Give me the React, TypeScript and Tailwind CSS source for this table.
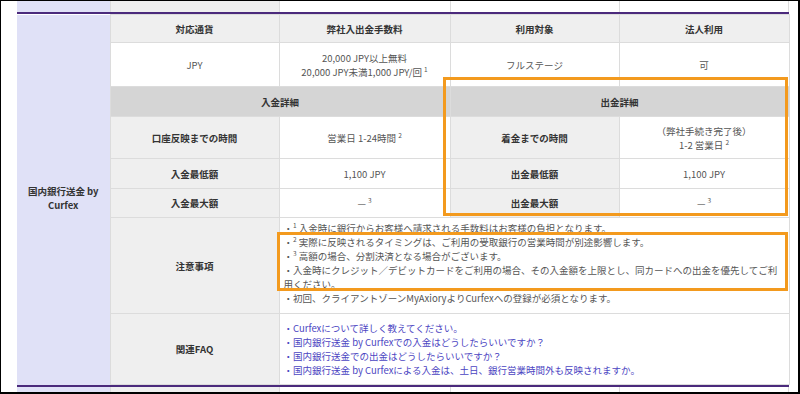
import React from 'react';

const label = 'bg-[#efefef] font-bold text-[#333] text-center border border-[#dcdcdc]';
const value = 'bg-white text-[#555] text-center border border-[#dcdcdc]';

function Sup({ n }: { n: number }) {
  return <span className="relative -top-[4px] text-[6.5px] leading-[0]">{n}</span>;
}

const notes = [
  <><Sup n={1} /> 入金時に銀行からお客様へ請求される手数料はお客様の負担となります。</>,
  <><Sup n={2} /> 実際に反映されるタイミングは、ご利用の受取銀行の営業時間が別途影響します。</>,
  <><Sup n={3} /> 高額の場合、分割決済となる場合がございます。</>,
  <>入金時にクレジット／デビットカードをご利用の場合、その入金額を上限とし、同カードへの出金を優先してご利用ください。</>,
  <>初回、クライアントゾーンMyAxioryよりCurfexへの登録が必須となります。</>,
];

const faqs = [
  'Curfexについて詳しく教えてください。',
  '国内銀行送金 by Curfexでの入金はどうしたらいいですか？',
  '国内銀行送金での出金はどうしたらいいですか？',
  '国内銀行送金 by Curfexによる入金は、土日、銀行営業時間外も反映されますか。',
];

function FragmentRow({ height }: { height: string }) {
  return (
    <div className={`flex ${height}`}>
      <div className="w-[93px] bg-[#e0e1f7]" />
      <div className="w-[169px] bg-[#efefef] border-l border-[#dcdcdc]" />
      <div className="w-[171px] bg-white border-l border-[#dcdcdc]" />
      <div className="w-[169px] bg-white border-l border-[#dcdcdc]" />
      <div className="w-[170px] bg-white border-l border-r border-[#dcdcdc]" />
    </div>
  );
}

export default function App() {
  return (
    <div
      className="relative w-[800px] h-[394px] overflow-hidden bg-white border-t border-l border-r-2 border-b-2 border-black pl-4 text-[9.5px] leading-[14px]"
      style={{ fontFamily: '"Noto Sans CJK JP", "Noto Sans", sans-serif' }}
    >
      <div className="w-[772px]">
        <FragmentRow height="h-[11px]" />
        <div className="h-[2px] bg-[#4b2a7c]" />

        <table className="w-[772px] table-fixed border-collapse">
          <colgroup>
            <col className="w-[93px]" />
            <col className="w-[169px]" />
            <col className="w-[171px]" />
            <col className="w-[169px]" />
            <col className="w-[170px]" />
          </colgroup>
          <tbody>
            <tr className="h-[28px]">
              <td rowSpan={8} className="bg-[#e0e1f7] font-bold text-[#333] text-center border-r border-[#dcdcdc] px-2 pb-1">
                国内銀行送金 by Curfex
              </td>
              <td className={label}>対応通貨</td>
              <td className={label}>弊社入出金手数料</td>
              <td className={label}>利用対象</td>
              <td className={label}>法人利用</td>
            </tr>
            <tr className="h-[44px]">
              <td className={value}>JPY</td>
              <td className={value}>
                20,000 JPY以上無料
                <br />
                20,000 JPY未満1,000 JPY/回 <Sup n={1} />
              </td>
              <td className={value}>フルステージ</td>
              <td className={value}>可</td>
            </tr>
            <tr className="h-[30px]">
              <td colSpan={2} className="bg-[#d5d5d5] font-bold text-[#333] text-center border border-[#dcdcdc]">
                入金詳細
              </td>
              <td colSpan={2} className="bg-[#d5d5d5] font-bold text-[#333] text-center border border-[#dcdcdc]">
                出金詳細
              </td>
            </tr>
            <tr className="h-[42px]">
              <td className={label}>口座反映までの時間</td>
              <td className={value}>
                営業日 1-24時間 <Sup n={2} />
              </td>
              <td className={label}>着金までの時間</td>
              <td className={value}>
                （弊社手続き完了後）
                <br />
                1-2 営業日 <Sup n={2} />
              </td>
            </tr>
            <tr className="h-[30px]">
              <td className={label}>入金最低額</td>
              <td className={value}>1,100 JPY</td>
              <td className={label}>出金最低額</td>
              <td className={value}>1,100 JPY</td>
            </tr>
            <tr className="h-[29px]">
              <td className={label}>入金最大額</td>
              <td className={value}>
                — <Sup n={3} />
              </td>
              <td className={label}>出金最大額</td>
              <td className={value}>
                — <Sup n={3} />
              </td>
            </tr>
            <tr className="h-[96px]">
              <td className={label}>注意事項</td>
              <td colSpan={3} className="bg-white text-[#555] border border-[#dcdcdc] pl-1 pr-[7px] pb-[5px]">
                {notes.map((n, i) => (
                  <div key={i}>・{n}</div>
                ))}
              </td>
            </tr>
            <tr className="h-[71px]">
              <td className={label}>関連FAQ</td>
              <td colSpan={3} className="bg-white text-[#4b45c2] border border-[#dcdcdc] pl-1 pr-[7px]">
                {faqs.map((f, i) => (
                  <div key={i}>・{f}</div>
                ))}
              </td>
            </tr>
          </tbody>
        </table>

        <div className="h-[2px] bg-[#4b2a7c]" />
        <FragmentRow height="h-[10px]" />
      </div>

      {/* annotation boxes */}
      <div className="absolute left-[442px] top-[76px] w-[345px] h-[139px] border-[3px] border-[#f39a1e]" />
      <div className="absolute left-[276px] top-[231px] w-[511px] h-[59px] border-[3px] border-[#f39a1e]" />
    </div>
  );
}
